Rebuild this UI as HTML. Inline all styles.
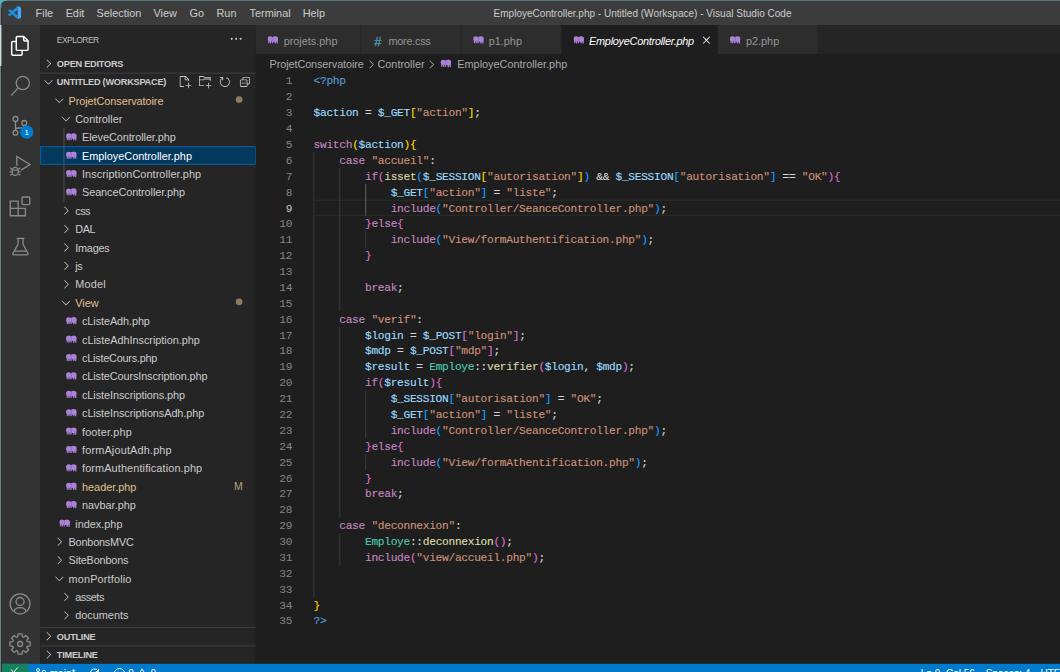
<!DOCTYPE html>
<html><head><meta charset="utf-8"><title>VS Code</title>
<style>
*{box-sizing:border-box;margin:0;padding:0}
html,body{width:1060px;height:672px;overflow:hidden;background:#1e1e1e}
body{font-family:"Liberation Sans",sans-serif;position:relative}
#win{position:absolute;left:0.4px;top:0px;width:1400px;height:830px;transform:scale(0.836);transform-origin:0 0;background:#1e1e1e;color:#ccc;font-size:13px;overflow:hidden;white-space:nowrap}
#title{position:absolute;left:0;top:0;width:100%;height:30px;background:#3c3c3c;color:#ccc}
#title .m{position:absolute;top:1px;line-height:30px;font-size:13px}
#title .tt{position:absolute;top:0.8px;line-height:30px;font-size:12px}
#act{position:absolute;left:0;top:30px;width:48px;height:764px;background:#333}
#act svg{position:absolute;left:9.6px;width:28px;height:28px;fill:none;stroke:#8a8a8a;stroke-width:1.35}
#act svg.on{stroke:#fff}
#side{position:absolute;left:48px;top:30px;width:258px;height:764px;background:#252526;overflow:hidden}
#tabs{position:absolute;left:306px;top:30px;right:0;height:35px;background:#252526}
#crumbs{position:absolute;left:306px;top:65px;right:0;height:22px;background:#1e1e1e}
#code{position:absolute;left:306px;top:87px;right:0;height:707px;background:#1e1e1e}
#status{position:absolute;left:0;top:794px;width:100%;height:22px;background:#007acc;color:#fff;font-size:12px}

#side .hd{position:absolute;left:0;width:100%;height:22px;line-height:22px;font-size:11px;font-weight:bold;color:#ccc;letter-spacing:-0.3px}
#side .hd.bt{border-top:1px solid rgba(204,204,204,0.2)}
#side .hd span{position:absolute;left:20px;top:0}
#side .hd.bt span{top:-1px}
#side svg.chv{position:absolute;width:16px;height:16px;fill:#c5c5c5}
#side .row{position:absolute;left:0;width:100%;height:22px;line-height:22px;font-size:13px;color:#ccc}
#side .row.sel{background:#04395e;outline:1px solid #0a6cb3;outline-offset:-1px;color:#fff}
#side .row span{position:absolute;top:0.8px}
#side .row.mod span{color:#e2c08d}
#side .row svg.php{position:absolute;top:5.6px;width:13px;height:9.5px}
#side .dot{position:absolute;left:233.6px;top:6.3px;width:8px;height:8px;border-radius:50%;background:#8d7b60}
#side svg.ai{position:absolute;top:3px;width:16px;height:16px;fill:#c5c5c5}

#tabs .tab{position:absolute;top:0;height:35px;background:#2d2d2d;border-right:1px solid #252526;color:#969696;font-size:13px;line-height:35px}
#tabs .tab.on{background:#1e1e1e;color:#fff;font-style:italic;letter-spacing:-0.26px}
#tabs .tab span{position:absolute;left:33px;top:1.6px}
#tabs svg.php{position:absolute;left:13.8px;top:12.6px;width:13px;height:9.5px}
#crumbs{font-size:13px;line-height:22px;color:#a9a9a9}
#crumbs span{position:absolute;top:1px}
#crumbs svg.chv{position:absolute;top:4px;width:16px;height:16px;fill:#a9a9a9}
#crumbs svg.php{position:absolute;top:6.3px;width:13px;height:9.5px}
#code .ln{position:absolute;left:0;width:43.5px;text-align:right;color:#858585;height:19px;line-height:19px;font-family:"Liberation Mono",monospace;font-size:13.4px;letter-spacing:-0.34px}
#code .ln.cur{color:#c6c6c6}
#code .l{position:absolute;left:69.1px;height:19px;line-height:19px;font-family:"Liberation Mono",monospace;font-size:13.4px;letter-spacing:-0.353px;white-space:pre;color:#d4d4d4;-webkit-text-stroke:0.15px}
.k{color:#569cd6}.c{color:#c586c0}.v{color:#9cdcfe}.s{color:#ce9178}.f{color:#dcdcaa}.t{color:#4ec9b0}
.b1{color:#ffd700}.b2{color:#da70d6}.b3{color:#179fff}
#code .g{position:absolute;width:1px;background:#404040}
#code .g.a{background:#707070}

#status span{position:absolute;top:1.4px;line-height:22px;font-size:12px;color:#fff}
#status svg{position:absolute;top:4px;width:16px;height:16px;fill:none;stroke:#fff;stroke-width:1.1}
.ov{position:absolute}
</style></head><body>
<div id="win">
<div id="title"><svg style="position:absolute;left:9px;top:7px" width="17" height="16.4" viewBox="0 0 16 16"><path d="M11.6 0.3 V4.6 L2.5 12.1 L0.5 11 V10.2 Z" fill="#1d8fdf"/><path d="M11.6 15.7 V11.4 L2.5 3.9 L0.5 5 V5.8 Z" fill="#1d8fdf"/><path d="M11.6 0.3 L15.5 2.1 V13.9 L11.6 15.7 Z" fill="#3fa9f5"/></svg><span class="m" style="left:42.6px">File</span><span class="m" style="left:78.5px">Edit</span><span class="m" style="left:115.5px">Selection</span><span class="m" style="left:183.7px">View</span><span class="m" style="left:226.8px">Go</span><span class="m" style="left:259px">Run</span><span class="m" style="left:298.5px">Terminal</span><span class="m" style="left:362px">Help</span><span class="tt" style="left:590.4px">EmployeController.php - Untitled (Workspace) - Visual Studio Code</span></div>
<div id="act"><div style="position:absolute;left:0;top:0;width:2px;height:48px;background:#fff"></div><svg viewBox="0 0 24 24" class="on" style="top:10.5px"><g stroke-width="1.5" stroke-linejoin="round"><path d="M8.1 7.5 H4.6 Q3.4 7.5 3.4 8.7 V20.3 Q3.4 21.5 4.6 21.5 H12.9 Q14.1 21.5 14.1 20.3 V16.5"/><path d="M9.3 2.2 H15.7 L20.2 6.7 V15.3 Q20.2 16.5 19 16.5 H9.3 Q8.1 16.5 8.1 15.3 V3.4 Q8.1 2.2 9.3 2.2 Z"/><path d="M15.7 2.2 V5.7 Q15.7 6.9 16.9 6.9 H20.2"/></g></svg><svg viewBox="0 0 24 24" class="" style="top:58.5px"><circle cx="14.8" cy="8.85" r="6.8"/><path d="M10.1 13.8 L2.9 21.8"/></svg><svg viewBox="0 0 24 24" class="" style="top:106.5px"><circle cx="7.3" cy="4.5" r="2.5"/><circle cx="7.3" cy="18.7" r="2.5"/><circle cx="16.3" cy="8.6" r="2.5"/><path d="M7.3 7 V16.2 M16.3 11.1 Q16.3 13.8 13.8 13.8 H9.8 Q7.6 13.8 7.3 15.6"/></svg><svg viewBox="0 0 24 24" class="" style="top:154.5px"><path d="M8.65 11.4 V1.85 L22.1 10.1 L13.05 15.85"/><ellipse cx="7" cy="17.2" rx="3.2" ry="4.2"/><path d="M3.9 15.2 L1.8 13.5 M10.1 15.2 L12.2 13.5 M3.8 17.6 H1.3 M10.2 17.6 H12.7 M4 19.7 L1.8 21.4 M10 19.7 L12.2 21.4 M4 15.9 H10" stroke-width="1.2"/></svg><svg viewBox="0 0 24 24" class="" style="top:202.5px"><path d="M2 6.5 H10 V14 H17.5 V21.5 H2 Z M2 14 H10 V21.5"/><rect x="14" y="2.3" width="8" height="7.7" rx="1"/></svg><svg viewBox="0 0 24 24" class="" style="top:250.5px"><path d="M8.5 3.5 H16.5 M10 3.5 V9.5 L4.7 19 Q4.2 20.4 5.5 20.4 H19.3 Q20.6 20.4 20.1 19 L15 9.5 V3.5 M6.3 16.6 H18.5"/></svg><svg viewBox="0 0 24 24" class="" style="top:678.5px"><circle cx="12" cy="11.4" r="10.2"/><circle cx="12" cy="9" r="4.1"/><path d="M5.9 19.4 C6.6 14 17.4 14 18.1 19.4"/></svg><svg viewBox="0 0 24 24" class="" style="top:726.5px"><circle cx="12" cy="11.4" r="2.5"/><path d="M9.69 3.95 L10.00 0.99 L14.00 0.99 L14.31 3.95 L15.64 4.50 L17.94 2.62 L20.78 5.46 L18.90 7.76 L19.45 9.09 L22.41 9.40 L22.41 13.40 L19.45 13.71 L18.90 15.04 L20.78 17.34 L17.94 20.18 L15.64 18.30 L14.31 18.85 L14.00 21.81 L10.00 21.81 L9.69 18.85 L8.36 18.30 L6.06 20.18 L3.22 17.34 L5.10 15.04 L4.55 13.71 L1.59 13.40 L1.59 9.40 L4.55 9.09 L5.10 7.76 L3.22 5.46 L6.06 2.62 L8.36 4.50 Z" stroke-linejoin="round"/></svg><div style="position:absolute;left:24px;top:120px;width:16px;height:16px;border-radius:8px;background:#007acc;color:#fff;font-size:9.5px;font-weight:normal;text-align:center;line-height:16.5px">1</div></div>
<div id="side"><div style="position:absolute;left:20px;top:0;line-height:35px;font-size:10.2px;color:#bbb;letter-spacing:-0.7px;word-spacing:0">EXPLORER</div><svg class="ai" viewBox="0 0 16 16" style="left:226.2px;top:8.2px;width:17px;height:17px"><circle cx="3" cy="8" r="1.15"/><circle cx="8" cy="8" r="1.15"/><circle cx="13" cy="8" r="1.15"/></svg><div class="hd" style="top:35px"><svg class="chv" viewBox="0 0 16 16" style="left:1.5px;top:3px"><path d="M10.072 8.024L5.715 3.667l.618-.62L11 7.716v.618L6.333 13l-.618-.619 4.357-4.357z"/></svg><span>OPEN EDITORS</span></div><div class="hd bt" style="top:57px"><svg class="chv" viewBox="0 0 16 16" style="left:1.5px;top:2px"><path d="M7.976 10.072l4.357-4.357.62.618L8.284 11h-.618L3 6.333l.619-.618 4.357 4.357z"/></svg><span>UNTITLED (WORKSPACE)</span><svg class="ai" viewBox="0 0 16 16" style="left:164.5px;top:2px"><path d="M9.5 1.1l3.4 3.5.1.4v2h-1V6H8V2H3v11h4v1H2.5l-.5-.5v-12l.5-.5h6.7l.3.1zM9 2v3h2.9L9 2zm4 14h-1v-3H9v-1h3V9h1v3h3v1h-3v3z"/></svg><svg class="ai" viewBox="0 0 16 16" style="left:188.5px;top:2px"><path d="M14.5 2H7.71l-.85-.85L6.51 1h-5l-.5.5v11l.5.5H7v-1H1.99V6h4.49l.35-.15.86-.86H14v1.5l-.001.51h1.011V2.5L14.5 2zm-.51 2h-6.5l-.35.15-.86.86H2v-3h4.29l.85.85.36.15H14l-.01.99zM13 16h-1v-3H9v-1h3V9h1v3h3v1h-3v3z" fill-rule="evenodd"/></svg><svg class="ai" viewBox="0 0 16 16" style="left:212.5px;top:2px"><path d="M4.681 3H2V2h3.5l.5.5V6H5V4a5 5 0 1 0 4.53-.761l.302-.954A6 6 0 1 1 4.681 3z"/></svg><svg class="ai" viewBox="0 0 16 16" style="left:236.5px;top:2px"><path d="M9 9H4v1h5V9z"/><path d="M5 3l1-1h7l1 1v7l-1 1h-2v2l-1 1H3l-1-1V6l1-1h2V3zm1 2h4l1 1v4h2V3H6v2zm4 1H3v7h7V6z" fill-rule="evenodd"/></svg></div><div class="row mod" style="top:79px"><svg class="chv" viewBox="0 0 16 16" style="left:15px;top:3px"><path d="M7.976 10.072l4.357-4.357.62.618L8.284 11h-.618L3 6.333l.619-.618 4.357 4.357z"/></svg><span style="left:34px;letter-spacing:-0.076px">ProjetConservatoire</span><div class="dot"></div></div><div class="row" style="top:101px"><svg class="chv" viewBox="0 0 16 16" style="left:23px;top:3px"><path d="M7.976 10.072l4.357-4.357.62.618L8.284 11h-.618L3 6.333l.619-.618 4.357 4.357z"/></svg><span style="left:42px;letter-spacing:0px">Controller</span></div><div class="row" style="top:123px"><svg class="php" viewBox="0 0 13 9.5" style="left:30.5px;"><g fill="#ae82d8"><circle cx="3.1" cy="3.5" r="3.1"/><ellipse cx="9.2" cy="3.7" rx="3.5" ry="3.4"/><rect x="5" y="1.2" width="3" height="5.4"/><rect x="0.8" y="4" width="1.4" height="4.8" rx="0.6"/><rect x="2.8" y="5" width="1.5" height="4.2" rx="0.4"/><rect x="5.1" y="5" width="1.6" height="3.9" rx="0.4"/><rect x="8.5" y="5" width="1.6" height="4.4" rx="0.4"/><rect x="10.9" y="5" width="1.5" height="4.5" rx="0.4"/></g><path d="M5.9 0.9 Q7.3 3.4 6 6.3" fill="none" stroke="#8559b5" stroke-width="0.75"/></svg><span style="left:50.1px;letter-spacing:-0.07px">EleveController.php</span></div><div class="row sel" style="top:145px"><svg class="php" viewBox="0 0 13 9.5" style="left:30.5px;"><g fill="#ae82d8"><circle cx="3.1" cy="3.5" r="3.1"/><ellipse cx="9.2" cy="3.7" rx="3.5" ry="3.4"/><rect x="5" y="1.2" width="3" height="5.4"/><rect x="0.8" y="4" width="1.4" height="4.8" rx="0.6"/><rect x="2.8" y="5" width="1.5" height="4.2" rx="0.4"/><rect x="5.1" y="5" width="1.6" height="3.9" rx="0.4"/><rect x="8.5" y="5" width="1.6" height="4.4" rx="0.4"/><rect x="10.9" y="5" width="1.5" height="4.5" rx="0.4"/></g><path d="M5.9 0.9 Q7.3 3.4 6 6.3" fill="none" stroke="#8559b5" stroke-width="0.75"/></svg><span style="left:50.1px;letter-spacing:0px">EmployeController.php</span></div><div class="row" style="top:167px"><svg class="php" viewBox="0 0 13 9.5" style="left:30.5px;"><g fill="#ae82d8"><circle cx="3.1" cy="3.5" r="3.1"/><ellipse cx="9.2" cy="3.7" rx="3.5" ry="3.4"/><rect x="5" y="1.2" width="3" height="5.4"/><rect x="0.8" y="4" width="1.4" height="4.8" rx="0.6"/><rect x="2.8" y="5" width="1.5" height="4.2" rx="0.4"/><rect x="5.1" y="5" width="1.6" height="3.9" rx="0.4"/><rect x="8.5" y="5" width="1.6" height="4.4" rx="0.4"/><rect x="10.9" y="5" width="1.5" height="4.5" rx="0.4"/></g><path d="M5.9 0.9 Q7.3 3.4 6 6.3" fill="none" stroke="#8559b5" stroke-width="0.75"/></svg><span style="left:50.1px;letter-spacing:0.094px">InscriptionController.php</span></div><div class="row" style="top:189px"><svg class="php" viewBox="0 0 13 9.5" style="left:30.5px;"><g fill="#ae82d8"><circle cx="3.1" cy="3.5" r="3.1"/><ellipse cx="9.2" cy="3.7" rx="3.5" ry="3.4"/><rect x="5" y="1.2" width="3" height="5.4"/><rect x="0.8" y="4" width="1.4" height="4.8" rx="0.6"/><rect x="2.8" y="5" width="1.5" height="4.2" rx="0.4"/><rect x="5.1" y="5" width="1.6" height="3.9" rx="0.4"/><rect x="8.5" y="5" width="1.6" height="4.4" rx="0.4"/><rect x="10.9" y="5" width="1.5" height="4.5" rx="0.4"/></g><path d="M5.9 0.9 Q7.3 3.4 6 6.3" fill="none" stroke="#8559b5" stroke-width="0.75"/></svg><span style="left:50.1px;letter-spacing:-0.094px">SeanceController.php</span></div><div class="row" style="top:211px"><svg class="chv" viewBox="0 0 16 16" style="left:23px;top:3px"><path d="M10.072 8.024L5.715 3.667l.618-.62L11 7.716v.618L6.333 13l-.618-.619 4.357-4.357z"/></svg><span style="left:42px;letter-spacing:-0.6px">css</span></div><div class="row" style="top:233px"><svg class="chv" viewBox="0 0 16 16" style="left:23px;top:3px"><path d="M10.072 8.024L5.715 3.667l.618-.62L11 7.716v.618L6.333 13l-.618-.619 4.357-4.357z"/></svg><span style="left:42px;letter-spacing:-0.45px">DAL</span></div><div class="row" style="top:255px"><svg class="chv" viewBox="0 0 16 16" style="left:23px;top:3px"><path d="M10.072 8.024L5.715 3.667l.618-.62L11 7.716v.618L6.333 13l-.618-.619 4.357-4.357z"/></svg><span style="left:42px;letter-spacing:-0.27px">Images</span></div><div class="row" style="top:277px"><svg class="chv" viewBox="0 0 16 16" style="left:23px;top:3px"><path d="M10.072 8.024L5.715 3.667l.618-.62L11 7.716v.618L6.333 13l-.618-.619 4.357-4.357z"/></svg><span style="left:42px;letter-spacing:-0.6px">js</span></div><div class="row" style="top:299px"><svg class="chv" viewBox="0 0 16 16" style="left:23px;top:3px"><path d="M10.072 8.024L5.715 3.667l.618-.62L11 7.716v.618L6.333 13l-.618-.619 4.357-4.357z"/></svg><span style="left:42px;letter-spacing:0.24px">Model</span></div><div class="row mod" style="top:321px"><svg class="chv" viewBox="0 0 16 16" style="left:23px;top:3px"><path d="M7.976 10.072l4.357-4.357.62.618L8.284 11h-.618L3 6.333l.619-.618 4.357 4.357z"/></svg><span style="left:42px;letter-spacing:0px">View</span><div class="dot"></div></div><div class="row" style="top:343px"><svg class="php" viewBox="0 0 13 9.5" style="left:30.5px;"><g fill="#ae82d8"><circle cx="3.1" cy="3.5" r="3.1"/><ellipse cx="9.2" cy="3.7" rx="3.5" ry="3.4"/><rect x="5" y="1.2" width="3" height="5.4"/><rect x="0.8" y="4" width="1.4" height="4.8" rx="0.6"/><rect x="2.8" y="5" width="1.5" height="4.2" rx="0.4"/><rect x="5.1" y="5" width="1.6" height="3.9" rx="0.4"/><rect x="8.5" y="5" width="1.6" height="4.4" rx="0.4"/><rect x="10.9" y="5" width="1.5" height="4.5" rx="0.4"/></g><path d="M5.9 0.9 Q7.3 3.4 6 6.3" fill="none" stroke="#8559b5" stroke-width="0.75"/></svg><span style="left:50.1px;letter-spacing:-0.1px">cListeAdh.php</span></div><div class="row" style="top:365px"><svg class="php" viewBox="0 0 13 9.5" style="left:30.5px;"><g fill="#ae82d8"><circle cx="3.1" cy="3.5" r="3.1"/><ellipse cx="9.2" cy="3.7" rx="3.5" ry="3.4"/><rect x="5" y="1.2" width="3" height="5.4"/><rect x="0.8" y="4" width="1.4" height="4.8" rx="0.6"/><rect x="2.8" y="5" width="1.5" height="4.2" rx="0.4"/><rect x="5.1" y="5" width="1.6" height="3.9" rx="0.4"/><rect x="8.5" y="5" width="1.6" height="4.4" rx="0.4"/><rect x="10.9" y="5" width="1.5" height="4.5" rx="0.4"/></g><path d="M5.9 0.9 Q7.3 3.4 6 6.3" fill="none" stroke="#8559b5" stroke-width="0.75"/></svg><span style="left:50.1px;letter-spacing:-0.035px">cListeAdhInscription.php</span></div><div class="row" style="top:387px"><svg class="php" viewBox="0 0 13 9.5" style="left:30.5px;"><g fill="#ae82d8"><circle cx="3.1" cy="3.5" r="3.1"/><ellipse cx="9.2" cy="3.7" rx="3.5" ry="3.4"/><rect x="5" y="1.2" width="3" height="5.4"/><rect x="0.8" y="4" width="1.4" height="4.8" rx="0.6"/><rect x="2.8" y="5" width="1.5" height="4.2" rx="0.4"/><rect x="5.1" y="5" width="1.6" height="3.9" rx="0.4"/><rect x="8.5" y="5" width="1.6" height="4.4" rx="0.4"/><rect x="10.9" y="5" width="1.5" height="4.5" rx="0.4"/></g><path d="M5.9 0.9 Q7.3 3.4 6 6.3" fill="none" stroke="#8559b5" stroke-width="0.75"/></svg><span style="left:50.1px;letter-spacing:-0.27px">cListeCours.php</span></div><div class="row" style="top:409px"><svg class="php" viewBox="0 0 13 9.5" style="left:30.5px;"><g fill="#ae82d8"><circle cx="3.1" cy="3.5" r="3.1"/><ellipse cx="9.2" cy="3.7" rx="3.5" ry="3.4"/><rect x="5" y="1.2" width="3" height="5.4"/><rect x="0.8" y="4" width="1.4" height="4.8" rx="0.6"/><rect x="2.8" y="5" width="1.5" height="4.2" rx="0.4"/><rect x="5.1" y="5" width="1.6" height="3.9" rx="0.4"/><rect x="8.5" y="5" width="1.6" height="4.4" rx="0.4"/><rect x="10.9" y="5" width="1.5" height="4.5" rx="0.4"/></g><path d="M5.9 0.9 Q7.3 3.4 6 6.3" fill="none" stroke="#8559b5" stroke-width="0.75"/></svg><span style="left:50.1px;letter-spacing:-0.124px">cListeCoursInscription.php</span></div><div class="row" style="top:431px"><svg class="php" viewBox="0 0 13 9.5" style="left:30.5px;"><g fill="#ae82d8"><circle cx="3.1" cy="3.5" r="3.1"/><ellipse cx="9.2" cy="3.7" rx="3.5" ry="3.4"/><rect x="5" y="1.2" width="3" height="5.4"/><rect x="0.8" y="4" width="1.4" height="4.8" rx="0.6"/><rect x="2.8" y="5" width="1.5" height="4.2" rx="0.4"/><rect x="5.1" y="5" width="1.6" height="3.9" rx="0.4"/><rect x="8.5" y="5" width="1.6" height="4.4" rx="0.4"/><rect x="10.9" y="5" width="1.5" height="4.5" rx="0.4"/></g><path d="M5.9 0.9 Q7.3 3.4 6 6.3" fill="none" stroke="#8559b5" stroke-width="0.75"/></svg><span style="left:50.1px;letter-spacing:-0.08px">cListeInscriptions.php</span></div><div class="row" style="top:453px"><svg class="php" viewBox="0 0 13 9.5" style="left:30.5px;"><g fill="#ae82d8"><circle cx="3.1" cy="3.5" r="3.1"/><ellipse cx="9.2" cy="3.7" rx="3.5" ry="3.4"/><rect x="5" y="1.2" width="3" height="5.4"/><rect x="0.8" y="4" width="1.4" height="4.8" rx="0.6"/><rect x="2.8" y="5" width="1.5" height="4.2" rx="0.4"/><rect x="5.1" y="5" width="1.6" height="3.9" rx="0.4"/><rect x="8.5" y="5" width="1.6" height="4.4" rx="0.4"/><rect x="10.9" y="5" width="1.5" height="4.5" rx="0.4"/></g><path d="M5.9 0.9 Q7.3 3.4 6 6.3" fill="none" stroke="#8559b5" stroke-width="0.75"/></svg><span style="left:50.1px;letter-spacing:-0.077px">cListeInscriptionsAdh.php</span></div><div class="row" style="top:475px"><svg class="php" viewBox="0 0 13 9.5" style="left:30.5px;"><g fill="#ae82d8"><circle cx="3.1" cy="3.5" r="3.1"/><ellipse cx="9.2" cy="3.7" rx="3.5" ry="3.4"/><rect x="5" y="1.2" width="3" height="5.4"/><rect x="0.8" y="4" width="1.4" height="4.8" rx="0.6"/><rect x="2.8" y="5" width="1.5" height="4.2" rx="0.4"/><rect x="5.1" y="5" width="1.6" height="3.9" rx="0.4"/><rect x="8.5" y="5" width="1.6" height="4.4" rx="0.4"/><rect x="10.9" y="5" width="1.5" height="4.5" rx="0.4"/></g><path d="M5.9 0.9 Q7.3 3.4 6 6.3" fill="none" stroke="#8559b5" stroke-width="0.75"/></svg><span style="left:50.1px;letter-spacing:0.18px">footer.php</span></div><div class="row" style="top:497px"><svg class="php" viewBox="0 0 13 9.5" style="left:30.5px;"><g fill="#ae82d8"><circle cx="3.1" cy="3.5" r="3.1"/><ellipse cx="9.2" cy="3.7" rx="3.5" ry="3.4"/><rect x="5" y="1.2" width="3" height="5.4"/><rect x="0.8" y="4" width="1.4" height="4.8" rx="0.6"/><rect x="2.8" y="5" width="1.5" height="4.2" rx="0.4"/><rect x="5.1" y="5" width="1.6" height="3.9" rx="0.4"/><rect x="8.5" y="5" width="1.6" height="4.4" rx="0.4"/><rect x="10.9" y="5" width="1.5" height="4.5" rx="0.4"/></g><path d="M5.9 0.9 Q7.3 3.4 6 6.3" fill="none" stroke="#8559b5" stroke-width="0.75"/></svg><span style="left:50.1px;letter-spacing:0.21px">formAjoutAdh.php</span></div><div class="row" style="top:519px"><svg class="php" viewBox="0 0 13 9.5" style="left:30.5px;"><g fill="#ae82d8"><circle cx="3.1" cy="3.5" r="3.1"/><ellipse cx="9.2" cy="3.7" rx="3.5" ry="3.4"/><rect x="5" y="1.2" width="3" height="5.4"/><rect x="0.8" y="4" width="1.4" height="4.8" rx="0.6"/><rect x="2.8" y="5" width="1.5" height="4.2" rx="0.4"/><rect x="5.1" y="5" width="1.6" height="3.9" rx="0.4"/><rect x="8.5" y="5" width="1.6" height="4.4" rx="0.4"/><rect x="10.9" y="5" width="1.5" height="4.5" rx="0.4"/></g><path d="M5.9 0.9 Q7.3 3.4 6 6.3" fill="none" stroke="#8559b5" stroke-width="0.75"/></svg><span style="left:50.1px;letter-spacing:0.15px">formAuthentification.php</span></div><div class="row mod" style="top:541px"><svg class="php" viewBox="0 0 13 9.5" style="left:30.5px;"><g fill="#ae82d8"><circle cx="3.1" cy="3.5" r="3.1"/><ellipse cx="9.2" cy="3.7" rx="3.5" ry="3.4"/><rect x="5" y="1.2" width="3" height="5.4"/><rect x="0.8" y="4" width="1.4" height="4.8" rx="0.6"/><rect x="2.8" y="5" width="1.5" height="4.2" rx="0.4"/><rect x="5.1" y="5" width="1.6" height="3.9" rx="0.4"/><rect x="8.5" y="5" width="1.6" height="4.4" rx="0.4"/><rect x="10.9" y="5" width="1.5" height="4.5" rx="0.4"/></g><path d="M5.9 0.9 Q7.3 3.4 6 6.3" fill="none" stroke="#8559b5" stroke-width="0.75"/></svg><span style="left:50.1px;letter-spacing:0px">header.php</span><span style="left:231.8px;top:0.2px;font-size:12.6px;color:#b8a078">M</span></div><div class="row" style="top:563px"><svg class="php" viewBox="0 0 13 9.5" style="left:30.5px;"><g fill="#ae82d8"><circle cx="3.1" cy="3.5" r="3.1"/><ellipse cx="9.2" cy="3.7" rx="3.5" ry="3.4"/><rect x="5" y="1.2" width="3" height="5.4"/><rect x="0.8" y="4" width="1.4" height="4.8" rx="0.6"/><rect x="2.8" y="5" width="1.5" height="4.2" rx="0.4"/><rect x="5.1" y="5" width="1.6" height="3.9" rx="0.4"/><rect x="8.5" y="5" width="1.6" height="4.4" rx="0.4"/><rect x="10.9" y="5" width="1.5" height="4.5" rx="0.4"/></g><path d="M5.9 0.9 Q7.3 3.4 6 6.3" fill="none" stroke="#8559b5" stroke-width="0.75"/></svg><span style="left:50.1px;letter-spacing:0px">navbar.php</span></div><div class="row" style="top:585px"><svg class="php" viewBox="0 0 13 9.5" style="left:22.5px;"><g fill="#ae82d8"><circle cx="3.1" cy="3.5" r="3.1"/><ellipse cx="9.2" cy="3.7" rx="3.5" ry="3.4"/><rect x="5" y="1.2" width="3" height="5.4"/><rect x="0.8" y="4" width="1.4" height="4.8" rx="0.6"/><rect x="2.8" y="5" width="1.5" height="4.2" rx="0.4"/><rect x="5.1" y="5" width="1.6" height="3.9" rx="0.4"/><rect x="8.5" y="5" width="1.6" height="4.4" rx="0.4"/><rect x="10.9" y="5" width="1.5" height="4.5" rx="0.4"/></g><path d="M5.9 0.9 Q7.3 3.4 6 6.3" fill="none" stroke="#8559b5" stroke-width="0.75"/></svg><span style="left:42.1px;letter-spacing:0px">index.php</span></div><div class="row" style="top:607px"><svg class="chv" viewBox="0 0 16 16" style="left:15px;top:3px"><path d="M10.072 8.024L5.715 3.667l.618-.62L11 7.716v.618L6.333 13l-.618-.619 4.357-4.357z"/></svg><span style="left:34px;letter-spacing:-0.24px">BonbonsMVC</span></div><div class="row" style="top:629px"><svg class="chv" viewBox="0 0 16 16" style="left:15px;top:3px"><path d="M10.072 8.024L5.715 3.667l.618-.62L11 7.716v.618L6.333 13l-.618-.619 4.357-4.357z"/></svg><span style="left:34px;letter-spacing:-0.2px">SiteBonbons</span></div><div class="row" style="top:651px"><svg class="chv" viewBox="0 0 16 16" style="left:15px;top:3px"><path d="M7.976 10.072l4.357-4.357.62.618L8.284 11h-.618L3 6.333l.619-.618 4.357 4.357z"/></svg><span style="left:34px;letter-spacing:0.2px">monPortfolio</span></div><div class="row" style="top:673px"><svg class="chv" viewBox="0 0 16 16" style="left:23px;top:3px"><path d="M10.072 8.024L5.715 3.667l.618-.62L11 7.716v.618L6.333 13l-.618-.619 4.357-4.357z"/></svg><span style="left:42px;letter-spacing:-0.55px">assets</span></div><div class="row" style="top:695px"><svg class="chv" viewBox="0 0 16 16" style="left:23px;top:3px"><path d="M10.072 8.024L5.715 3.667l.618-.62L11 7.716v.618L6.333 13l-.618-.619 4.357-4.357z"/></svg><span style="left:42px;letter-spacing:0px">documents</span></div><div style="position:absolute;left:28px;top:123px;width:1px;height:88px;background:#585858"></div><div style="position:absolute;left:0;top:718px;width:100%;height:46px;background:#252526"></div><div class="hd bt" style="top:720px"><svg class="chv" viewBox="0 0 16 16" style="left:1.5px;top:2px"><path d="M10.072 8.024L5.715 3.667l.618-.62L11 7.716v.618L6.333 13l-.618-.619 4.357-4.357z"/></svg><span>OUTLINE</span></div><div class="hd bt" style="top:742px"><svg class="chv" viewBox="0 0 16 16" style="left:1.5px;top:2px"><path d="M10.072 8.024L5.715 3.667l.618-.62L11 7.716v.618L6.333 13l-.618-.619 4.357-4.357z"/></svg><span>TIMELINE</span></div></div>
<div id="tabs"><div class="tab" style="left:0.3px;width:125.4px"><svg class="php" viewBox="0 0 13 9.5" style="left:14px;"><g fill="#ae82d8"><circle cx="3.1" cy="3.5" r="3.1"/><ellipse cx="9.2" cy="3.7" rx="3.5" ry="3.4"/><rect x="5" y="1.2" width="3" height="5.4"/><rect x="0.8" y="4" width="1.4" height="4.8" rx="0.6"/><rect x="2.8" y="5" width="1.5" height="4.2" rx="0.4"/><rect x="5.1" y="5" width="1.6" height="3.9" rx="0.4"/><rect x="8.5" y="5" width="1.6" height="4.4" rx="0.4"/><rect x="10.9" y="5" width="1.5" height="4.5" rx="0.4"/></g><path d="M5.9 0.9 Q7.3 3.4 6 6.3" fill="none" stroke="#8559b5" stroke-width="0.75"/></svg><span style="letter-spacing:0px">projets.php</span></div><div class="tab" style="left:125.7px;width:119.9px"><div style="position:absolute;left:16px;top:1.5px;color:#519aba;font-size:15.5px;font-weight:normal;font-style:normal;-webkit-text-stroke:0.35px #519aba">#</div><span style="letter-spacing:-0.3px">more.css</span></div><div class="tab" style="left:245.6px;width:120px"><svg class="php" viewBox="0 0 13 9.5" style="left:14px;"><g fill="#ae82d8"><circle cx="3.1" cy="3.5" r="3.1"/><ellipse cx="9.2" cy="3.7" rx="3.5" ry="3.4"/><rect x="5" y="1.2" width="3" height="5.4"/><rect x="0.8" y="4" width="1.4" height="4.8" rx="0.6"/><rect x="2.8" y="5" width="1.5" height="4.2" rx="0.4"/><rect x="5.1" y="5" width="1.6" height="3.9" rx="0.4"/><rect x="8.5" y="5" width="1.6" height="4.4" rx="0.4"/><rect x="10.9" y="5" width="1.5" height="4.5" rx="0.4"/></g><path d="M5.9 0.9 Q7.3 3.4 6 6.3" fill="none" stroke="#8559b5" stroke-width="0.75"/></svg><span style="letter-spacing:0px">p1.php</span></div><div class="tab on" style="left:365.6px;width:187.7px"><svg class="php" viewBox="0 0 13 9.5" style="left:14px;"><g fill="#ae82d8"><circle cx="3.1" cy="3.5" r="3.1"/><ellipse cx="9.2" cy="3.7" rx="3.5" ry="3.4"/><rect x="5" y="1.2" width="3" height="5.4"/><rect x="0.8" y="4" width="1.4" height="4.8" rx="0.6"/><rect x="2.8" y="5" width="1.5" height="4.2" rx="0.4"/><rect x="5.1" y="5" width="1.6" height="3.9" rx="0.4"/><rect x="8.5" y="5" width="1.6" height="4.4" rx="0.4"/><rect x="10.9" y="5" width="1.5" height="4.5" rx="0.4"/></g><path d="M5.9 0.9 Q7.3 3.4 6 6.3" fill="none" stroke="#8559b5" stroke-width="0.75"/></svg><span style="letter-spacing:-0.3px">EmployeController.php</span><svg style="position:absolute;left:165px;top:9.5px;fill:#fff" width="16" height="16" viewBox="0 0 16 16"><path d="M8 8.707l3.646 3.647.708-.707L8.707 8l3.647-3.646-.707-.708L8 7.293 4.354 3.646l-.707.708L7.293 8l-3.646 3.646.707.708L8 8.707z"/></svg></div><div class="tab" style="left:553.3px;width:119.7px"><svg class="php" viewBox="0 0 13 9.5" style="left:14px;"><g fill="#ae82d8"><circle cx="3.1" cy="3.5" r="3.1"/><ellipse cx="9.2" cy="3.7" rx="3.5" ry="3.4"/><rect x="5" y="1.2" width="3" height="5.4"/><rect x="0.8" y="4" width="1.4" height="4.8" rx="0.6"/><rect x="2.8" y="5" width="1.5" height="4.2" rx="0.4"/><rect x="5.1" y="5" width="1.6" height="3.9" rx="0.4"/><rect x="8.5" y="5" width="1.6" height="4.4" rx="0.4"/><rect x="10.9" y="5" width="1.5" height="4.5" rx="0.4"/></g><path d="M5.9 0.9 Q7.3 3.4 6 6.3" fill="none" stroke="#8559b5" stroke-width="0.75"/></svg><span style="letter-spacing:0px">p2.php</span></div></div>
<div id="crumbs"><span style="left:16.5px;letter-spacing:-0.12px">ProjetConservatoire</span><svg class="chv" viewBox="0 0 16 16" style="left:129.5px"><path d="M10.072 8.024L5.715 3.667l.618-.62L11 7.716v.618L6.333 13l-.618-.619 4.357-4.357z"/></svg><span style="left:145.5px">Controller</span><svg class="chv" viewBox="0 0 16 16" style="left:202px"><path d="M10.072 8.024L5.715 3.667l.618-.62L11 7.716v.618L6.333 13l-.618-.619 4.357-4.357z"/></svg><svg class="php" viewBox="0 0 13 9.5" style="left:221px;"><g fill="#ae82d8"><circle cx="3.1" cy="3.5" r="3.1"/><ellipse cx="9.2" cy="3.7" rx="3.5" ry="3.4"/><rect x="5" y="1.2" width="3" height="5.4"/><rect x="0.8" y="4" width="1.4" height="4.8" rx="0.6"/><rect x="2.8" y="5" width="1.5" height="4.2" rx="0.4"/><rect x="5.1" y="5" width="1.6" height="3.9" rx="0.4"/><rect x="8.5" y="5" width="1.6" height="4.4" rx="0.4"/><rect x="10.9" y="5" width="1.5" height="4.5" rx="0.4"/></g><path d="M5.9 0.9 Q7.3 3.4 6 6.3" fill="none" stroke="#8559b5" stroke-width="0.75"/></svg><span style="left:241px">EmployeController.php</span></div>
<div id="code"><div style="position:absolute;left:69.1px;right:0;top:152px;height:19px;border-top:1.5px solid #2e2e2e;border-bottom:1.5px solid #2e2e2e"></div><div class="g " style="left:69.1px;top:95px;height:532px"></div><div class="g " style="left:99.848px;top:114px;height:171px"></div><div class="g " style="left:99.848px;top:304px;height:228px"></div><div class="g " style="left:99.848px;top:551px;height:38px"></div><div class="g a" style="left:130.596px;top:133px;height:38px"></div><div class="g " style="left:130.596px;top:190px;height:19px"></div><div class="g " style="left:130.596px;top:380px;height:57px"></div><div class="g " style="left:130.596px;top:456px;height:19px"></div><div class="ln" style="top:0.9px">1</div><div class="l" style="top:0.9px"><span class="k">&lt;?php</span></div><div class="ln" style="top:19.9px">2</div><div class="ln" style="top:38.9px">3</div><div class="l" style="top:38.9px"><span class="v">$action</span> = <span class="v">$_GET</span><span class="b1">[</span><span class="s">&quot;action&quot;</span><span class="b1">]</span>;</div><div class="ln" style="top:57.9px">4</div><div class="ln" style="top:76.9px">5</div><div class="l" style="top:76.9px"><span class="c">switch</span><span class="b1">(</span><span class="v">$action</span><span class="b1">)</span><span class="b1">{</span></div><div class="ln" style="top:95.9px">6</div><div class="l" style="top:95.9px">    <span class="c">case</span> <span class="s">&quot;accueil&quot;</span>:</div><div class="ln" style="top:114.9px">7</div><div class="l" style="top:114.9px">        <span class="c">if</span><span class="b2">(</span><span class="f">isset</span><span class="b3">(</span><span class="v">$_SESSION</span><span class="b1">[</span><span class="s">&quot;autorisation&quot;</span><span class="b1">]</span><span class="b3">)</span> &amp;&amp; <span class="v">$_SESSION</span><span class="b3">[</span><span class="s">&quot;autorisation&quot;</span><span class="b3">]</span> == <span class="s">&quot;OK&quot;</span><span class="b2">)</span><span class="b2">{</span></div><div class="ln" style="top:133.9px">8</div><div class="l" style="top:133.9px">            <span class="v">$_GET</span><span class="b3">[</span><span class="s">&quot;action&quot;</span><span class="b3">]</span> = <span class="s">&quot;liste&quot;</span>;</div><div class="ln cur" style="top:152.9px">9</div><div class="l" style="top:152.9px">            <span class="c">include</span><span class="b3">(</span><span class="s">&quot;Controller/SeanceController.php&quot;</span><span class="b3">)</span>;</div><div class="ln" style="top:171.9px">10</div><div class="l" style="top:171.9px">        <span class="b2">}</span><span class="c">else</span><span class="b2">{</span></div><div class="ln" style="top:190.9px">11</div><div class="l" style="top:190.9px">            <span class="c">include</span><span class="b3">(</span><span class="s">&quot;View/formAuthentification.php&quot;</span><span class="b3">)</span>;</div><div class="ln" style="top:209.9px">12</div><div class="l" style="top:209.9px">        <span class="b2">}</span></div><div class="ln" style="top:228.9px">13</div><div class="ln" style="top:247.9px">14</div><div class="l" style="top:247.9px">        <span class="c">break</span>;</div><div class="ln" style="top:266.9px">15</div><div class="ln" style="top:285.9px">16</div><div class="l" style="top:285.9px">    <span class="c">case</span> <span class="s">&quot;verif&quot;</span>:</div><div class="ln" style="top:304.9px">17</div><div class="l" style="top:304.9px">        <span class="v">$login</span> = <span class="v">$_POST</span><span class="b2">[</span><span class="s">&quot;login&quot;</span><span class="b2">]</span>;</div><div class="ln" style="top:323.9px">18</div><div class="l" style="top:323.9px">        <span class="v">$mdp</span> = <span class="v">$_POST</span><span class="b2">[</span><span class="s">&quot;mdp&quot;</span><span class="b2">]</span>;</div><div class="ln" style="top:342.9px">19</div><div class="l" style="top:342.9px">        <span class="v">$result</span> = <span class="t">Employe</span>::<span class="f">verifier</span><span class="b2">(</span><span class="v">$login</span>, <span class="v">$mdp</span><span class="b2">)</span>;</div><div class="ln" style="top:361.9px">20</div><div class="l" style="top:361.9px">        <span class="c">if</span><span class="b2">(</span><span class="v">$result</span><span class="b2">)</span><span class="b2">{</span></div><div class="ln" style="top:380.9px">21</div><div class="l" style="top:380.9px">            <span class="v">$_SESSION</span><span class="b3">[</span><span class="s">&quot;autorisation&quot;</span><span class="b3">]</span> = <span class="s">&quot;OK&quot;</span>;</div><div class="ln" style="top:399.9px">22</div><div class="l" style="top:399.9px">            <span class="v">$_GET</span><span class="b3">[</span><span class="s">&quot;action&quot;</span><span class="b3">]</span> = <span class="s">&quot;liste&quot;</span>;</div><div class="ln" style="top:418.9px">23</div><div class="l" style="top:418.9px">            <span class="c">include</span><span class="b3">(</span><span class="s">&quot;Controller/SeanceController.php&quot;</span><span class="b3">)</span>;</div><div class="ln" style="top:437.9px">24</div><div class="l" style="top:437.9px">        <span class="b2">}</span><span class="c">else</span><span class="b2">{</span></div><div class="ln" style="top:456.9px">25</div><div class="l" style="top:456.9px">            <span class="c">include</span><span class="b3">(</span><span class="s">&quot;View/formAthentification.php&quot;</span><span class="b3">)</span>;</div><div class="ln" style="top:475.9px">26</div><div class="l" style="top:475.9px">        <span class="b2">}</span></div><div class="ln" style="top:494.9px">27</div><div class="l" style="top:494.9px">        <span class="c">break</span>;</div><div class="ln" style="top:513.9px">28</div><div class="ln" style="top:532.9px">29</div><div class="l" style="top:532.9px">    <span class="c">case</span> <span class="s">&quot;deconnexion&quot;</span>:</div><div class="ln" style="top:551.9px">30</div><div class="l" style="top:551.9px">        <span class="t">Employe</span>::<span class="f">deconnexion</span><span class="b2">(</span><span class="b2">)</span>;</div><div class="ln" style="top:570.9px">31</div><div class="l" style="top:570.9px">        <span class="c">include</span><span class="b2">(</span><span class="s">&quot;view/accueil.php&quot;</span><span class="b2">)</span>;</div><div class="ln" style="top:589.9px">32</div><div class="ln" style="top:608.9px">33</div><div class="ln" style="top:627.9px">34</div><div class="l" style="top:627.9px"><span class="b1">}</span></div><div class="ln" style="top:646.9px">35</div><div class="l" style="top:646.9px"><span class="k">?&gt;</span></div></div>
<div id="status"><div style="position:absolute;left:0;top:0;width:34px;height:22px;background:#16825d"></div><svg viewBox="0 0 16 16" style="left:9px"><path d="M13 -0.5 L8.3 5 L13 10.5 M4 2.7 L8.5 7.5 L4 12"/></svg><svg viewBox="0 0 16 16" style="left:41px"><circle cx="4.5" cy="3.5" r="1.8"/><circle cx="4.5" cy="12.5" r="1.8"/><circle cx="11.5" cy="5.5" r="1.8"/><path d="M4.5 5.3 V10.7 M11.5 7.3 C11.5 10 6 9 4.7 10.8"/></svg><span style="left:59.5px">main*</span><svg viewBox="0 0 16 16" style="left:105px"><path d="M3 7 A5 5 0 0 1 12.5 5 M13 9 A5 5 0 0 1 3.5 11 M12.8 2 V5.2 H9.6 M3.2 14 V10.8 H6.4"/></svg><svg viewBox="0 0 16 16" style="left:135px"><circle cx="8" cy="8" r="6.3"/><path d="M5.5 5.5 L10.5 10.5 M10.5 5.5 L5.5 10.5"/></svg><span style="left:153.5px">0</span><svg viewBox="0 0 16 16" style="left:162px"><path d="M8 2 L14.5 13.5 H1.5 Z M8 6.5 V10 M8 11 V12.2"/></svg><span style="left:180px">0</span><span style="left:1101.5px">Ln 9, Col 56</span><span style="left:1179px">Spaces: 4</span><span style="left:1244.5px">UTF-8</span></div>
</div>
<div class="ov" style="left:0;top:0;width:1060px;height:1px;background:#567a7e"></div><div class="ov" style="left:0;top:1px;width:1060px;height:1px;background:#393838"></div><div class="ov" style="left:0;top:0;width:1px;height:672px;background:#6b8384"></div><div class="ov" style="left:1px;top:1px;width:1px;height:671px;background:#2d2d2d"></div><div class="ov" style="left:0;top:25px;width:1px;height:41px;background:#c5dcdb"></div><div class="ov" style="left:1px;top:25px;width:1px;height:41px;background:#7a7676"></div><svg class="ov" style="left:0;top:0" width="8" height="8" viewBox="0 0 8 8"><path d="M0 0 H6.6 V1 H5.6 Q1.3 1 1.3 5.6 V8 H0 Z" fill="#52b0b8"/><path d="M0 5 H1.3 V8 H0 Z" fill="#5d8a8e"/></svg>
</body></html>
